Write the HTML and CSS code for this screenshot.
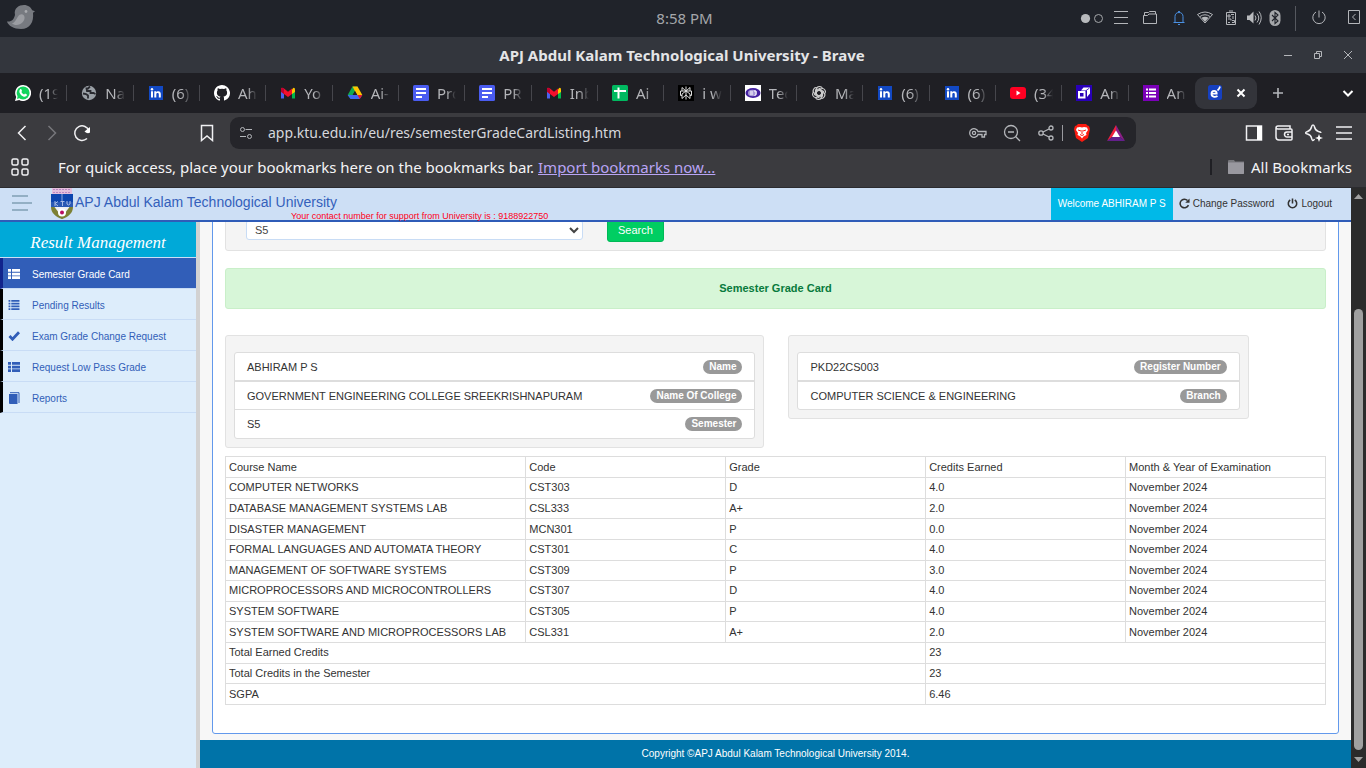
FILE: index.html
```html
<!DOCTYPE html>
<html lang="en">
<head>
<meta charset="utf-8">
<meta name="viewport" content="width=device-width, initial-scale=1">
<title>APJ Abdul Kalam Technological University</title>
<link rel="stylesheet" href="styles.css">
</head>
<body>
<svg class="sprite" aria-hidden="true">
  <symbol id="linkedin" viewBox="0 0 16 16"><rect x="1" y="1" width="14" height="14" fill="#1249c4"/><path d="M3 6.300h2v6.200H3zM6.300 6.300h1.900v.9c.9-1.500 4.600-1.500 4.600 1.600v3.700h-2V9.300c0-1.800-2.500-1.700-2.500 0v3.200h-2z" fill="#fff"/><circle cx="4" cy="4.200" r="1.200" fill="#fff"/></symbol>
  <symbol id="gmail" viewBox="0 0 16 16"><path d="M1 4.500v9h3V7z" fill="#4a62f0"/><path d="M15 4.500v9h-3V7z" fill="#00b84f"/><path d="M12 4.500 13.200 3Q15 2.400 15 4.500V7l-3 2z" fill="#ffc400"/><path d="M1 6.800V4.500C1 2.400 2.600 2.600 4 3.600L8 6.800l4-3.200V9l-4 3-4-3z" fill="#f4102c"/><path d="M1 4.500C1 2.600 2.600 2.500 4 3.600V9L1 6.800z" fill="#c00030"/></symbol>
  <symbol id="docs" viewBox="0 0 16 16"><rect width="16" height="16" rx="1.500" fill="#4a5cf0"/><path d="M3 4h10M3 8h10M3 12h6" stroke="#fff" stroke-width="2"/></symbol>
  <symbol id="list" viewBox="0 0 12 10"><path d="M0 0h3v2.700H0zM4 0h8v2.700H4zM0 3.700h3v2.700H0zM4 3.700h8v2.700H4zM0 7.300h3V10H0zM4 7.300h8V10H4z" fill="currentColor"/></symbol>
</svg>

<div class="screen">
  <header class="desktop-bar">
    <svg class="bird" viewBox="0 0 28 26"><path d="M0 16.500C5 17 7 14 8 10C6.500 3 12 0 17 0c4 0 7 2.500 8.200 5.200L28 6.200l-2 1.600C27 17 23 24 14 24 7 24 1 20.500 0 16.500z" fill="#777a80"/><path d="M5 18.500c3-1 4-4 6-7 2-3 6-3 6.500.5.600 4-3.500 8-8 8-2 0-3.500-.6-4.500-1.500z" fill="#9b9da2"/><circle cx="19" cy="6.500" r="1.400" fill="#a8aaae"/></svg>
    <time class="clock">8:58 PM</time>
    <div class="tray">
      <svg class="dots" viewBox="0 0 24 16"><circle cx="5.500" cy="8.500" r="4.600" fill="#b8babd"/><circle cx="18.500" cy="8.500" r="4" fill="none" stroke="#a5a7aa"/></svg>
      <div class="tray-group wide">
        <svg viewBox="0 0 16 16"><path d="M1 1.500h14M1 7.500h14M1 13.500h14" class="line"/></svg>
        <svg viewBox="0 0 16 16"><path d="M1.500 13.500v-8h4l1.500-1.500h7.500v9.500zM2.500 5V2.500H6.500L7.500 1.500h6V4" class="line"/></svg>
        <svg viewBox="0 0 16 16"><path d="M2.500 12.500h11M4 12V6.500C4 4 5.500 2.500 8 2.500S12 4 12 6.500V12M7 2l1-.8L9 2M7 14.500h2" class="line blue"/></svg>
      </div>
      <div class="tray-group">
        <svg viewBox="0 0 16 16"><path d="M.5 4.500Q8-.5 15.500 4.500L8 13zM3 6.500Q8 3 13 6.500" class="line"/><path d="M4.500 7.800Q8 5.500 11.500 7.800L8 12z" fill="#b8babd"/></svg>
        <svg viewBox="0 0 16 16"><path d="M3.500 2.500h9v12h-9zM6 1h4" class="line"/><path d="M5 5h2v2H5zM8 4.500h3M10 6v3M5 9h3v1.500M5 12.500h2M9 10.500h2.500v2H9" class="line"/></svg>
      </div>
      <div class="tray-group tight">
        <svg viewBox="0 0 16 16"><path d="M1 5.500h2.500L7.500 1.500v12l-4-3.500H1z" fill="#b8babd"/><path d="M9 5.500q2 2.500 0 5M11 3.500q3.500 4.500 0 9M13 1.500q4.500 6 0 13" class="line"/></svg>
        <svg viewBox="0 0 16 16"><rect x="2.500" width="11" height="16" rx="5.500" fill="#a5a7aa"/><path d="m5 5 6 6-3 2.500v-11L11 5l-6 6" fill="none" stroke="#20232a" stroke-width="1.100"/></svg>
      </div>
      <span class="tray-divider"></span>
      <div class="tray-group far">
        <svg viewBox="0 0 16 16"><path d="M8 .5v7M5 2a6.200 6.200 0 1 0 6 0" class="line"/></svg>
        <svg viewBox="0 0 16 16"><path d="M2.500 .5h11v13h-11zM9.500 4l-3 3 3 3" class="line"/></svg>
      </div>
    </div>
  </header>

  <div class="title-bar">
    <span class="window-title">APJ Abdul Kalam Technological University - Brave</span>
    <div class="window-buttons">
      <button aria-label="Minimise"><svg viewBox="0 0 10 10"><path d="M1 5.500h8" class="line"/></svg></button>
      <button aria-label="Restore"><svg viewBox="0 0 10 10"><path d="M1.500 3.500h5v5h-5zM3.500 3V1.500h5v5H7" class="line"/></svg></button>
      <button aria-label="Close window"><svg viewBox="0 0 10 10"><path d="m1 1 8 8M9 1 1 9" class="line"/></svg></button>
    </div>
  </div>

  <nav class="tab-strip" aria-label="Tabs">
    <div class="tabs">
      <a href="#" class="tab"><svg viewBox="0 0 16 16"><path d="M8 0a8 8 0 1 1-3.800 15L0 16l1.200-4A8 8 0 0 1 8 0z" fill="#fff"/><circle cx="8.100" cy="7.900" r="6.500" fill="#12d45c"/><path d="m2 14 .8-3.500L5 13z" fill="#12d45c"/><path d="M5 4.500c1-1 1.600 0 2 1.500L6.400 7c.6 1.200 1.400 2 2.700 2.500l.9-1c1.500.6 2.200.8 1.900 1.800C11 12.500 8 12 6 9.900 4.500 8.300 3.600 6 5 4.500z" fill="#fff"/></svg><span>(19</span></a>
      <a href="#" class="tab"><svg viewBox="0 0 16 16"><circle cx="8" cy="8" r="7.200" fill="#9aa0a6"/><path d="M2 8.500l3 .5 2 1.500v3M9 1.500 7 3.500H5.500L6 6h3.500v2h3l2 1" fill="none" stroke="#292a30" stroke-width="1.800"/></svg><span>Na</span></a>
      <a href="#" class="tab"><svg><use href="#linkedin"/></svg><span>(6)</span></a>
      <a href="#" class="tab"><svg viewBox="0 0 16 16"><path d="M8 0C3.600 0 0 3.600 0 8c0 3.600 2.300 6.600 5.500 7.600.4.100.5-.2.500-.4v-1.500c-2.200.5-2.700-1-2.700-1-.4-.9-.9-1.200-.9-1.200-.7-.5.100-.5.100-.5.800.1 1.200.8 1.200.8.700 1.300 1.900.9 2.300.7.100-.5.300-.9.500-1.100-1.800-.2-3.600-.9-3.600-4 0-.9.300-1.600.8-2.100-.1-.2-.4-1 .1-2.100 0 0 .7-.2 2.200.8a8 8 0 0 1 4 0c1.500-1 2.200-.8 2.200-.8.400 1.100.2 1.900.1 2.100.5.600.8 1.300.8 2.100 0 3.100-1.900 3.800-3.700 4 .3.300.6.800.6 1.500v2.300c0 .2.100.5.500.4A8 8 0 0 0 8 0z" fill="#fff"/></svg><span>Ah</span></a>
      <a href="#" class="tab"><svg><use href="#gmail"/></svg><span>Yo</span></a>
      <a href="#" class="tab"><svg viewBox="0 0 16 16"><path d="M5.500 1.500h5L8 6 3.500 14 .7 10z" fill="#11a94f"/><path d="M5.500 1.500h5l4.800 8.500H10z" fill="#ffc400"/><path d="M.7 10h14.600L12.700 14H3.500z" fill="#3f68f0"/><path d="M10.500 10h4.800l-2.600 4z" fill="#e71c2b"/><path d="m8 6 2.300 4H5.700z" fill="#202024"/></svg><span>Ai-</span></a>
      <a href="#" class="tab"><svg><use href="#docs"/></svg><span>Pro</span></a>
      <a href="#" class="tab"><svg><use href="#docs"/></svg><span>PR</span></a>
      <a href="#" class="tab"><svg><use href="#gmail"/></svg><span>Inb</span></a>
      <a href="#" class="tab"><svg viewBox="0 0 16 16"><rect width="16" height="16" rx="1.500" fill="#00b960"/><path d="M2 6h12M6.500 2.500v11" stroke="#fff" stroke-width="2"/></svg><span>Ai</span></a>
      <a href="#" class="tab"><svg viewBox="0 0 16 16"><path fill="#000" d="M0 0h16v16H0z"/><path d="M8 1.500v13M4 2.500 8 6l4-3.500V6M4 2.500V6M8 6 4 9v4.500L8 10l4 3.500V9L8 6M4 10.500H2.500V6H13.500v4.500H12" fill="none" stroke="#ddd" stroke-width="1"/></svg><span>i w</span></a>
      <a href="#" class="tab"><svg viewBox="0 0 16 16"><path fill="#fff" d="M0 0h16v16H0z"/><ellipse cx="8" cy="8" rx="7.500" ry="5" fill="#4420a0"/><ellipse cx="7.500" cy="8" rx="4.500" ry="3.200" fill="#a99bd8"/><path d="M9 6h2v3q0 1.500-1.500 1.500M5 7h3M5 9h3" fill="none" stroke="#fff"/></svg><span>Tec</span></a>
      <a href="#" class="tab"><svg viewBox="0 0 16 16"><g fill="none" stroke="#ccc" stroke-width="1.100"><path id="petal" d="M5.500 9.500v-5c0-4 5.500-4 6-.5M5.500 6.500 9 4.500l4 2.300"/><use href="#petal" transform="rotate(60 8 8)"/><use href="#petal" transform="rotate(120 8 8)"/><use href="#petal" transform="rotate(180 8 8)"/><use href="#petal" transform="rotate(240 8 8)"/><use href="#petal" transform="rotate(300 8 8)"/></g></svg><span>Ma</span></a>
      <a href="#" class="tab"><svg><use href="#linkedin"/></svg><span>(6)</span></a>
      <a href="#" class="tab"><svg><use href="#linkedin"/></svg><span>(6)</span></a>
      <a href="#" class="tab"><svg viewBox="0 0 16 16"><rect y="2" width="16" height="12" rx="3" fill="#ff0022"/><path d="m6.500 5.500 4 2.500-4 2.500z" fill="#fff"/></svg><span>(34</span></a>
      <a href="#" class="tab"><svg viewBox="0 0 16 16"><path fill="#2900b8" d="M0 0h16v16H0z"/><path d="M3 7h5.500v5.500H3z" fill="none" stroke="#fff" stroke-width="2"/><path d="M5 5.500 7.500 2.500H14v6L11 12V5.500z" fill="#fff"/><path d="m9.500 6 4-3" stroke="#2900b8" stroke-width=".8"/></svg><span>An</span></a>
      <a href="#" class="tab"><svg viewBox="0 0 16 16"><path fill="#7a00b8" d="M0 0h16v16H0z"/><path d="M3 4.500h2M3 8h2M3 11.500h2M6 4.500h7M6 8h7M6 11.500h7" stroke="#fff" stroke-width="2"/></svg><span>An</span></a>
    </div>
    <div class="tab-current">
      <svg viewBox="0 0 16 16"><rect x="1" width="14" height="15" rx="2.500" fill="#1640c0"/><path d="M4.500 8.700h5.200C9.800 4.800 4.500 4.800 4.500 8.800c0 3.400 3.500 3.700 6 2.200" fill="none" stroke="#fff" stroke-width="1.800"/><path d="M10.500 5.500Q12.500 4 13 1.500" fill="none" stroke="#fff" stroke-width="1.700"/></svg>
      <button aria-label="Close tab"><svg viewBox="0 0 10 10"><path d="m1.500 1.500 7 7M8.500 1.500l-7 7" class="line bright"/></svg></button>
    </div>
    <button class="tab-new" aria-label="New tab"><svg viewBox="0 0 12 12"><path d="M6 1v10M1 6h10" class="line plus"/></svg></button>
    <button class="tab-search" aria-label="Search tabs"><svg viewBox="0 0 12 12"><path d="m1.500 4 4.500 4.500L10.500 4" class="line bright"/></svg></button>
  </nav>

  <div class="toolbar">
    <div class="nav-buttons">
      <button aria-label="Back"><svg viewBox="0 0 18 18"><path d="M12.500 2 5.500 9l7 7" class="line light"/></svg></button>
      <button aria-label="Forward"><svg viewBox="0 0 18 18"><path d="m5.500 2 7 7-7 7" class="line dim"/></svg></button>
      <button aria-label="Reload"><svg viewBox="0 0 18 18"><path d="M14 14.500A7.300 7.300 0 1 1 16 7" class="line light"/><path d="M11.500 7.500 17 3v5.500q-2.500 2-5.500-1z" fill="#fff"/></svg></button>
    </div>
    <button class="save-page" aria-label="Bookmark this page"><svg viewBox="0 0 18 18"><path d="M3.500 1.500h11v15L9 12l-5.500 4.500z" class="line light"/></svg></button>
    <div class="omnibox">
      <svg viewBox="0 0 14 14"><circle cx="3.500" cy="3.500" r="2" class="line"/><path d="M6.500 3.500h6.500M1 10.500h6" class="line"/><circle cx="10.500" cy="10.500" r="2" class="line"/></svg>
      <input type="text" aria-label="Address" value="app.ktu.edu.in/eu/res/semesterGradeCardListing.htm">
      <div class="page-actions">
        <button aria-label="Passwords"><svg viewBox="0 0 18 18"><path d="M9 7.500h8v3h-1.500V13H13v-2.500H9A4.300 4.300 0 1 1 9 7.500z" class="line soft"/><circle cx="5" cy="9" r="1.600" class="line soft"/></svg></button>
        <button aria-label="Zoom"><svg viewBox="0 0 18 18"><circle cx="8" cy="8" r="6.500" class="line soft"/><path d="M5 8h6M12.800 12.800 17 17" class="line soft"/></svg></button>
        <button aria-label="Share"><svg viewBox="0 0 18 18"><circle cx="4" cy="9" r="2.200" class="line soft"/><circle cx="14" cy="4" r="2" class="line soft"/><circle cx="14" cy="14" r="2" class="line soft"/><path d="m6 8 6-3M6 10l6 3" class="line soft"/></svg></button>
      </div>
      <div class="brave-actions">
        <button aria-label="Brave Shields"><svg viewBox="0 0 18 18"><path d="M5 0h8l1.500 1.500L16 2l1 3-2 9-6 4-6-4L1 5l1-3 1.500-.5z" fill="#fb1b10"/><path d="m4 3.500 3-.5 2 .5 2-.5 3 .5 1 2.500-2 3 .5 2-3 1.500L9 14.500 7.500 12.500l-3-1.500.5-2-2-3z" fill="#fff"/><path d="m5 6 3 1M13 6l-3 1M9 6v4M7 10.500l2 1 2-1" stroke="#fb1b10" fill="none"/></svg></button>
        <button aria-label="Brave Rewards"><svg viewBox="0 0 18 18"><path d="M9 1v9l-9 7z" fill="#f0203c"/><path d="M9 1v9l9 7z" fill="#8b1f86"/><path d="M0 17h18l-9-7z" fill="#64208c"/><path d="m9 6.500 4 6.500H5z" fill="#fff"/></svg></button>
      </div>
    </div>
    <div class="browser-actions">
      <button aria-label="Side panel"><svg viewBox="0 0 18 18"><path d="M1.500 2h15v14h-15z" class="line light"/><path d="M12 2h5v14h-5z" fill="#fff"/></svg></button>
      <button aria-label="Wallet"><svg viewBox="0 0 18 18"><path d="M15 5V2H3Q1 2 1 4v9q0 3 3 3h12q1 0 1-1V6q0-1-1-1H3Q1 5 1 3.500M17 8h-5a2.500 2.500 0 0 0 0 5h5M12 10.500h2" class="line light"/></svg></button>
      <button aria-label="Assistant"><svg viewBox="0 0 18 18"><path d="M8 1q1.200 0 1.500 2 .8 3.500 4 4.500 2.500.5 2.500 1.500M8 1Q6.800 1 6.500 3 5.700 6.500 2.500 7.500q-4 1.500 0 2.500Q6 11 6.500 14q1 4.500 3 1" class="line light"/><path d="m14 10 1.100 2.900L18 14l-2.900 1.100L14 18l-1.100-2.900L10 14l2.900-1.100z" fill="#fff"/></svg></button>
      <button aria-label="Menu"><svg viewBox="0 0 18 18"><path d="M1 3h16M1 9h16M1 15h16" class="line light"/></svg></button>
    </div>
  </div>

  <div class="bookmark-bar">
    <svg viewBox="0 0 18 18"><g class="line light"><rect x="1" y="1" width="6" height="6" rx="1.500"/><rect x="11" y="1" width="6" height="6" rx="1.500"/><rect x="1" y="11" width="6" height="6" rx="1.500"/><rect x="11" y="11" width="6" height="6" rx="1.500"/></g></svg>
    <p>For quick access, place your bookmarks here on the bookmarks bar. <a href="#">Import bookmarks now...</a></p>
    <button class="all-bookmarks"><svg viewBox="0 0 18 16"><path d="M1 3V2q0-1 1-1h5l1 1.500h9V15H1z" fill="#77777c"/><path d="M1 3.500h16V14q0 1-1 1H2q-1 0-1-1z" fill="#99989f"/></svg>All Bookmarks</button>
  </div>

  <div class="viewport">
    <div class="site">
      <header class="site-header">
        <button class="menu-toggle" aria-label="Toggle menu"><i></i><i></i><i></i></button>
        <svg class="crest" viewBox="0 0 22 31"><path d="M1 0h20v6H1z" fill="#e3bfdc"/><path d="M2 1.500h18M2 4.500h18" stroke="#b987c4" stroke-dasharray="2 1"/><path d="M0 6h22v8H0z" fill="#0d45ae"/><path d="M11 6v8" stroke="#8fa9de"/><path d="M0 14h22v5H0z" fill="#2b5ab4"/><path d="M4 13v5M4 15.500l3-2M4 15.500l3 2.500M9.500 13.500h4M11.500 13v5M16 13v3q1.500 2 3 0v-3" stroke="#a9bce6" fill="none"/><path d="M0 19h22c0 6-5 10-11 12C5 29 0 25 0 19z" fill="#7c8135"/><path d="M3.500 19 11 29l7.500-10z" fill="#eef0f5"/><path d="M5 26.500 11 31l6-4.500z" fill="#7c8135"/><circle cx="11" cy="24.500" r="4" fill="#fff"/><circle cx="11" cy="24.500" r="2" fill="#b90d61"/></svg>
        <div class="brand">
          <h1>APJ Abdul Kalam Technological University</h1>
          <p>Your contact number for support from University is : 9188922750</p>
        </div>
        <span class="welcome">Welcome ABHIRAM P S</span>
        <nav class="account" aria-label="Account">
          <a href="#"><svg viewBox="0 0 12 12"><path d="M10.300 7.800A4.700 4.700 0 1 1 9.300 2.700" fill="none" stroke="currentColor" stroke-width="1.700"/><path d="M11.500.5v4.700H6.800z" fill="currentColor"/></svg>Change Password</a>
          <a href="#"><svg viewBox="0 0 12 12"><path d="M3.500 2.200a4.600 4.600 0 1 0 5 0M6 .5v5.500" fill="none" stroke="currentColor" stroke-width="1.700"/></svg>Logout</a>
        </nav>
      </header>
      <div class="site-body">
        <aside class="sidebar">
          <h2>Result Management</h2>
          <ul>
            <li><a href="#" class="active"><svg viewBox="0 0 12 10"><use href="#list"/></svg>Semester Grade Card</a></li>
            <li><a href="#"><svg viewBox="0 0 12 11"><path d="M0 0h2v2H0zM3 0h9v2H3zM0 3h2v2H0zM3 3h9v2H3zM0 6h2v2H0zM3 6h9v2H3zM0 9h2v2H0zM3 9h9v2H3z" fill="currentColor"/></svg>Pending Results</a></li>
            <li><a href="#"><svg viewBox="0 0 12 10"><path d="m1.500 5 3 3.200L11 1.300" fill="none" stroke="currentColor" stroke-width="2.800"/></svg>Exam Grade Change Request</a></li>
            <li><a href="#"><svg viewBox="0 0 12 10"><use href="#list"/></svg>Request Low Pass Grade</a></li>
            <li><a href="#"><svg class="tall" viewBox="0 0 12 12"><path d="M1 2h8.500v10H2q-1 0-1-1z" fill="currentColor"/><path d="M2 .7h9V11" fill="none" stroke="currentColor"/></svg>Reports</a></li>
          </ul>
        </aside>
        <div class="content">
          <main class="panel">
            <form class="well filter">
              <select aria-label="Semester"><option>S5</option></select>
              <button type="button">Search</button>
            </form>
            <div class="banner">Semester Grade Card</div>
            <div class="details">
              <div class="well">
                <ul class="facts">
                  <li>ABHIRAM P S<b>Name</b></li>
                  <li>GOVERNMENT ENGINEERING COLLEGE SREEKRISHNAPURAM<b>Name Of College</b></li>
                  <li>S5<b>Semester</b></li>
                </ul>
              </div>
              <div class="well">
                <ul class="facts">
                  <li>PKD22CS003<b>Register Number</b></li>
                  <li>COMPUTER SCIENCE &amp; ENGINEERING<b>Branch</b></li>
                </ul>
              </div>
            </div>
            <table class="grades">
              <thead><tr><th class="course">Course Name</th><th>Code</th><th>Grade</th><th>Credits Earned</th><th>Month &amp; Year of Examination</th></tr></thead>
              <tbody>
                <tr><td>COMPUTER NETWORKS</td><td>CST303</td><td>D</td><td>4.0</td><td>November 2024</td></tr>
                <tr><td>DATABASE MANAGEMENT SYSTEMS LAB</td><td>CSL333</td><td>A+</td><td>2.0</td><td>November 2024</td></tr>
                <tr><td>DISASTER MANAGEMENT</td><td>MCN301</td><td>P</td><td>0.0</td><td>November 2024</td></tr>
                <tr><td>FORMAL LANGUAGES AND AUTOMATA THEORY</td><td>CST301</td><td>C</td><td>4.0</td><td>November 2024</td></tr>
                <tr><td>MANAGEMENT OF SOFTWARE SYSTEMS</td><td>CST309</td><td>P</td><td>3.0</td><td>November 2024</td></tr>
                <tr><td>MICROPROCESSORS AND MICROCONTROLLERS</td><td>CST307</td><td>D</td><td>4.0</td><td>November 2024</td></tr>
                <tr><td>SYSTEM SOFTWARE</td><td>CST305</td><td>P</td><td>4.0</td><td>November 2024</td></tr>
                <tr><td>SYSTEM SOFTWARE AND MICROPROCESSORS LAB</td><td>CSL331</td><td>A+</td><td>2.0</td><td>November 2024</td></tr>
                <tr><td colspan="3">Total Earned Credits</td><td colspan="2">23</td></tr>
                <tr><td colspan="3">Total Credits in the Semester</td><td colspan="2">23</td></tr>
                <tr><td colspan="3">SGPA</td><td colspan="2">6.46</td></tr>
              </tbody>
            </table>
          </main>
          <footer class="site-footer">Copyright ©APJ Abdul Kalam Technological University 2014.</footer>
        </div>
      </div>
    </div>
    <div class="scrollbar" aria-hidden="true">
      <svg viewBox="0 0 9 5"><path d="M0 5 4.500 0 9 5z" fill="#a0a0a0"/></svg>
      <div class="track"><div class="thumb"></div></div>
      <svg viewBox="0 0 9 5"><path d="m0 0 4.500 5L9 0z" fill="#a0a0a0"/></svg>
    </div>
  </div>
</div>
</body>
</html>
```

FILE: styles.css
```css
* { box-sizing: border-box; }
body { margin: 0; font-family: "Liberation Sans", Arial, sans-serif; font-size: 10px; color: #333; }
h1, h2, p, ul { margin: 0; padding: 0; font-weight: normal; }
ul { list-style: none; }
button { border: 0; padding: 0; background: none; color: inherit; font: inherit; display: flex; align-items: center; }
svg { display: block; flex: none; }
.sprite { position: absolute; width: 0; height: 0; }
.line { fill: none; stroke: #b4b6ba; stroke-width: 1; }
.line.blue { stroke: #4a90e2; }
.line.bright { stroke: #fff; stroke-width: 2; }
.line.light { stroke: #f0f0f2; stroke-width: 1.500; }
.line.dim { stroke: #77777c; stroke-width: 1.500; }
.line.soft { stroke-width: 1.300; }
.line.plus { stroke-width: 1.600; }

.screen { display: flex; flex-direction: column; height: 100vh; overflow: hidden; }
.desktop-bar, .title-bar, .tab-strip, .toolbar, .bookmark-bar { flex: none; display: flex; align-items: center; font-family: "Noto Sans", sans-serif; font-size: 15px; }

.desktop-bar { display: grid; grid-template-columns: 1fr auto 1fr; height: 37px; padding: 0 4px 1px 7px; background: #20232a; color: #a5a7aa; }
.bird { width: 28px; height: 26px; }
.tray { display: flex; align-items: center; justify-content: flex-end; }
.tray svg { width: 16px; height: 16px; }
.tray .dots { width: 24px; margin-right: 9px; }
.tray-group { display: flex; gap: 10px; margin-right: 7px; }
.tray-group.wide { gap: 13px; margin-right: 10px; }
.tray-group.tight { gap: 5px; margin-right: 12px; }
.tray-group.far { gap: 19px; margin: 0; }
.tray-divider { width: 1px; height: 25px; margin-right: 15px; background: #55585f; }

.title-bar { display: grid; grid-template-columns: 1fr auto 1fr; height: 36px; padding: 0 13px 1px 11px; background: #33363d; color: #e4e5e7; font-weight: bold; }
.window-title { grid-column: 2; }
.window-buttons { display: flex; gap: 20px; justify-content: flex-end; }
.window-buttons svg { width: 10px; height: 10px; }

.tab-strip { height: 40px; padding-left: 3px; background: #1f1f24; }
.tabs { flex: 1; display: flex; min-width: 0; }
.tab { flex: 1 1 0; min-width: 0; display: flex; align-items: center; gap: 8px; height: 16px; padding: 0 8px 0 14px; border-right: 1px solid #46464c; color: #b4b5b9; text-decoration: none; }
.tab:first-child { padding-left: 12px; }
.tab:last-child { border-color: transparent; }
.tab svg { width: 16px; height: 16px; }
.tab span { flex: 1; min-width: 0; overflow: hidden; white-space: nowrap; line-height: 22px; -webkit-mask-image: linear-gradient(90deg, #000 50%, transparent); mask-image: linear-gradient(90deg, #000 50%, transparent); }
.tab-current { display: flex; align-items: center; justify-content: space-between; width: 62px; height: 32px; padding: 0 11px 0 12px; border-radius: 9px; background: #33343a; }
.tab-current > svg { width: 16px; height: 16px; }
.tab-current button svg { width: 10px; height: 10px; }
.tab-new { margin-left: 15px; }
.tab-search { margin: 0 12px 0 58px; }
.tab-new svg, .tab-search svg { width: 12px; height: 12px; }

.toolbar { height: 39px; padding: 0 13px; background: #3b3b3f; }
.toolbar button svg { width: 18px; height: 18px; }
.nav-buttons, .browser-actions { display: flex; gap: 12px; }
.save-page { margin: 0 14px 0 107px; }
.omnibox { flex: 1; display: flex; align-items: center; height: 32px; padding: 0 11px 0 9px; border-radius: 9px; background: #25252a; }
.omnibox > svg { width: 14px; height: 14px; }
.omnibox input { flex: 1; min-width: 0; margin-left: 15px; padding: 0; border: 0; outline: 0; background: none; color: #d5d7dc; font: inherit; font-size: 14px; }
.page-actions { display: flex; gap: 16px; padding-right: 7px; border-right: 1px solid #9a9a9f; height: 16px; align-items: center; }
.brave-actions { display: flex; gap: 16px; margin-left: 10px; }
.browser-actions { margin-left: 109px; }

.bookmark-bar { height: 36px; padding: 0 14px 5px 11px; background: #3b3b3f; border-bottom: 1px solid #2b2b2f; color: #f4f4f6; }
.bookmark-bar > svg { width: 18px; height: 18px; }
.bookmark-bar p { flex: 1; margin-left: 29px; white-space: nowrap; }
.bookmark-bar p a { color: #b9a4f5; }
.all-bookmarks { gap: 6px; padding-left: 15px; border-left: 2px solid #1f1f24; height: 16px; white-space: nowrap; }
.all-bookmarks svg { width: 18px; height: 16px; }

.viewport { flex: 1; min-height: 0; display: flex; }
.site { flex: 1; min-width: 0; display: flex; flex-direction: column; }
.scrollbar { flex: none; width: 15px; display: flex; flex-direction: column; align-items: center; gap: 7px; padding: 6px 0; background: #2b2b2b; }
.scrollbar svg { width: 9px; height: 5px; }
.track { flex: 1; display: flex; align-items: flex-end; }
.thumb { width: 9px; height: 81%; border-radius: 5px; background: #a0a0a0; }

.site-header { flex: none; display: flex; height: 34px; background: #cddff5; border-bottom: 2px solid #2f5cb8; }
.menu-toggle { flex-direction: column; align-items: flex-start; gap: 5px; width: 20px; margin: 0 19px 0 12px; padding-top: 7px; }
.menu-toggle i { width: 16px; height: 2px; background: #93afc4; }
.menu-toggle i:nth-child(2) { width: 20px; }
.crest { width: 22px; height: 31px; }
.brand { flex: 1; padding: 5px 0 0 2px; white-space: nowrap; }
.brand h1 { font-size: 14px; line-height: 19px; color: #345fbb; }
.brand p { margin-left: 216px; font-size: 9px; line-height: 8px; color: #ff0019; }
.welcome { padding: 0 7px; line-height: 31px; background: #00b9e8; color: #fff; }
.account { display: flex; align-items: center; gap: 13px; padding: 0 19px 1px 6px; }
.account a { display: flex; align-items: center; gap: 3px; color: #333; text-decoration: none; }
.account svg { width: 11px; height: 11px; }

.site-body { flex: 1; min-height: 0; display: flex; }
.sidebar { flex: none; width: 200px; background: #ddedfb; border-right: 4px solid #d2d2d2; }
.sidebar h2 { height: 36px; padding-top: 6px; border-bottom: 1px solid #cddff5; background: #00a9d8; color: #fff; font: italic 17px/30px "Liberation Serif", serif; text-align: center; }
.sidebar a { display: flex; align-items: center; gap: 12px; height: 31px; padding: 2px 6px 0 5px; border-left: 3px solid #000; border-bottom: 1px solid #c8dcf5; color: #315eb8; text-decoration: none; }
.sidebar a.active { background: #315eb8; border-left-color: #11248c; color: #fff; }
.sidebar a svg { width: 12px; height: 10px; }
.sidebar a svg.tall { height: 12px; }

.content { flex: 1; min-width: 0; display: flex; flex-direction: column; justify-content: flex-end; overflow: hidden; background: #f7f7f7; }
.panel { flex: none; margin: 0 12px 6px; padding: 12px 12px 28px; border: 1px solid #6299ec; border-radius: 3px; background: #fff; }
.well { border: 1px solid #e2e2e2; border-radius: 3px; background: #f4f4f4; }
.filter { display: flex; align-items: center; gap: 24px; padding: 8px 20px; }
.filter select { width: 337px; height: 20px; padding: 0 0 0 4px; border: 1px solid #c8dcf5; border-radius: 3px; background: #fff; color: #444; font: 11px "Liberation Sans", Arial, sans-serif; }
.filter button { height: 25px; padding: 0 10px; border: 1px solid #00b957; border-radius: 3px; background: #00ce62; color: #fff; font-size: 11px; }
.banner { margin: 17px 0 26px; padding: 12px; border: 1px solid #c9efc9; border-radius: 3px; background: #d7f6d8; color: #087a3c; font-size: 11px; font-weight: bold; line-height: 15px; text-align: center; }
.details { display: grid; grid-template-columns: 49% 41.8%; align-items: start; gap: 24px; margin-bottom: 8px; }
.details .well { padding: 16px 8px 8px; }
.facts { border: 1px solid #ddd; border-radius: 3px; background: #fff; font-size: 11px; }
.facts li { display: flex; align-items: center; justify-content: space-between; height: 27px; padding: 0 12px; }
.facts li + li { height: 29px; border-top: 1px solid #ddd; }
.facts li:nth-child(2) { border-top-width: 2px; }
.facts b { padding: 0 6px; border-radius: 7px; background: #999; color: #fff; font-size: 10px; line-height: 14px; }
.grades { width: 100%; height: 249px; table-layout: fixed; border-collapse: collapse; font-size: 11px; line-height: 14px; }
.grades th, .grades td { padding: 0 3px 1px; border: 1px solid #ddd; font-weight: normal; text-align: left; }
.grades th { height: 21px; }
.grades .course { width: 27.3%; }
.site-footer { flex: none; padding: 6px 0 7px; background: #0073a8; color: #fff; line-height: 15px; text-align: center; }
```
